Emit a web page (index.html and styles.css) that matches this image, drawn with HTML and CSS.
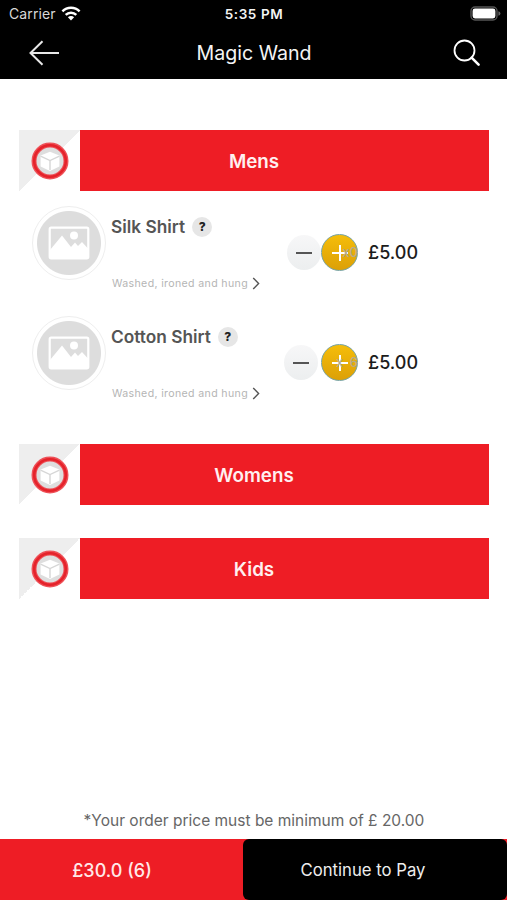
FILE: index.html
```html
<!DOCTYPE html>
<html lang="en">

    <head>
        <meta charset="utf-8">
        <title>Magic Wand</title>
        <link rel="stylesheet" href="styles.css">
    </head>

    <body>
        <!-- shared icons -->
        <svg class="defs" width="0" height="0">
            <symbol id="cube" viewBox="0 0 38 38">
                <circle cx="19" cy="19" r="16" fill="#dedede" stroke="#ee5158" stroke-width="5" />
                <circle cx="19" cy="19" r="15.8" fill="none" stroke="#e5232b" stroke-width="2.6" />
                <path d="M19 9.8l9.4 3.8v10.8L19 29l-9.4-4.6V13.6z" fill="#fff" />
                <path d="M9.6 14.2l9.4 4.4 9.4-4.4M19 18.6V28" fill="none" stroke="#d6d6d6" stroke-width="1.4" />
            </symbol>
            <symbol id="photo" viewBox="0 0 42 34">
                <rect x="1.7" y="1.7" width="38.6" height="30.6" rx="1.5" fill="none" stroke="#fff" stroke-width="2.2" />
                <circle cx="26" cy="9.5" r="4" fill="#fff" />
                <path d="M2 24l12-14.5 9 11.5 4-4.5 3 3.5 4-4 6 6.5v10H2z" fill="#fff" />
            </symbol>
            <symbol id="chevron" viewBox="0 0 8 13">
                <path d="M1.2 1l5.4 5.5L1.2 12" fill="none" stroke="#555" stroke-width="1.4" />
            </symbol>
        </svg>

        <header>
            <div class="status">
                <span class="carrier">Carrier</span>
                <svg class="wifi" width="20" height="15" viewBox="0 0 20 15" fill="none" stroke="#fff" stroke-width="2.5">
                    <path d="M1.4 5.4a12.2 12.2 0 0 1 17.2 0M4.7 8.9a7.5 7.5 0 0 1 10.6 0" />
                    <path d="M6.9 11.2a4.4 4.4 0 0 1 6.2 0L10 14.4z" fill="#fff" stroke="none" />
                </svg>
                <span class="time">5:35 PM</span>
                <svg class="battery" width="31" height="15" viewBox="0 0 31 15">
                    <rect x="1" y="1" width="26" height="13" rx="4" fill="none" stroke="#555" stroke-width="1.4" />
                    <rect x="2.6" y="2.6" width="22.8" height="9.8" rx="2.4" fill="#fff" />
                    <path d="M28.4 5.2q2 .6 2 2.3t-2 2.3z" fill="#666" />
                </svg>
            </div>
            <nav>
                <svg class="back" width="32" height="26" viewBox="0 0 32 26" fill="none" stroke="#e8e8e8" stroke-width="2">
                    <path d="M14.5 1.2L2.5 13l12 11.8M2.5 13H31" />
                </svg>
                <h1>Magic Wand</h1>
                <svg class="search" width="28" height="28" viewBox="0 0 28 28" fill="none" stroke="#fff">
                    <circle cx="11.5" cy="11.5" r="10" stroke-width="1.8" />
                    <path d="M18.6 18.6l7 7" stroke-width="2.6" stroke-linecap="round" />
                </svg>
            </nav>
        </header>

        <main>
            <section>
                <div class="category">
                    <div class="emblem"><svg><use href="#cube" /></svg></div>
                    <h2>Mens</h2>
                </div>
                <div class="item">
                    <div class="thumb"><svg><use href="#photo" /></svg></div>
                    <div class="info">
                        <div class="name">Silk Shirt <span class="help">?</span></div>
                        <div class="desc">Washed, ironed and hung <svg><use href="#chevron" /></svg></div>
                    </div>
                    <div class="stepper">
                        <button class="minus"></button>
                        <button class="plus"><span class="qty">x0</span></button>
                    </div>
                    <div class="price">£5.00</div>
                </div>
                <div class="item">
                    <div class="thumb"><svg><use href="#photo" /></svg></div>
                    <div class="info">
                        <div class="name">Cotton Shirt <span class="help">?</span></div>
                        <div class="desc">Washed, ironed and hung <svg><use href="#chevron" /></svg></div>
                    </div>
                    <div class="stepper spaced">
                        <button class="minus"></button>
                        <button class="plus"><span class="qty">x 6</span></button>
                    </div>
                    <div class="price">£5.00</div>
                </div>
            </section>
            <section>
                <div class="category">
                    <div class="emblem"><svg><use href="#cube" /></svg></div>
                    <h2>Womens</h2>
                </div>
            </section>
            <section>
                <div class="category">
                    <div class="emblem"><svg><use href="#cube" /></svg></div>
                    <h2>Kids</h2>
                </div>
            </section>
        </main>

        <p class="notice">*Your order price must be minimum of £ 20.00</p>
        <footer>
            <div class="total">£30.0 (6)</div>
            <button class="pay">Continue to Pay</button>
        </footer>
    </body>

</html>
```
FILE: styles.css
```css
* {
    box-sizing: border-box;
}

body {
    margin: 0;
    height: 900px;
    display: flex;
    flex-direction: column;
    background: #fff;
    font-family: Inter, "Liberation Sans", sans-serif;
    overflow: hidden;
}

h1, h2, p {
    margin: 0;
}

button {
    border: none;
    padding: 0;
    font-family: inherit;
}

.defs {
    position: absolute;
}

header {
    height: 79px;
    background: #000;
    color: #f4f4f4;
}

.status {
    height: 27px;
    display: grid;
    grid-template-columns: 52px 20px 1fr 31px;
    align-items: center;
    padding: 0 6px 0 9px;
    font-size: 14px;
}

.carrier {
    color: #d8d8d8;
    letter-spacing: 0.1px;
}

.time {
    padding-right: 43px;
    font-size: 13.5px;
    font-weight: 600;
    letter-spacing: 0.6px;
    text-align: center;
}

nav {
    height: 52px;
    display: flex;
    align-items: center;
    justify-content: space-between;
    padding: 0 26px 0 28px;
}

h1 {
    margin-right: 5px;
    font-size: 19.6px;
    font-weight: 400;
}

main {
    flex: 1;
    display: flex;
    flex-direction: column;
    gap: 33px;
    padding: 51px 18px 0 19px;
}

.category {
    display: flex;
    height: 61px;
}

.emblem {
    width: 61px;
    display: flex;
    align-items: center;
    justify-content: center;
    background: linear-gradient(135deg, #eee 50%, #fff 50%);
}

.emblem svg {
    width: 38px;
    height: 38px;
}

h2 {
    flex: 1;
    padding-right: 61px;
    background: #ee1d25;
    color: #fff0f0;
    font-size: 18.8px;
    font-weight: 600;
    line-height: 63px;
    text-align: center;
}

.item {
    height: 110px;
    display: flex;
    padding: 15px 0 0 13px;
}

.thumb {
    width: 74px;
    height: 74px;
    display: flex;
    align-items: center;
    justify-content: center;
    border: 1px solid #eee;
    border-radius: 50%;
    background: radial-gradient(circle, #ddd 31.5px, #fff 32.5px);
}

.thumb svg {
    width: 42px;
    height: 34px;
}

.info {
    width: 178px;
    padding: 9px 0 0 5px;
}

.name {
    display: flex;
    align-items: center;
    gap: 7px;
    height: 22px;
    color: #555;
    font-size: 17.3px;
    font-weight: 600;
    white-space: nowrap;
}

.help {
    width: 20px;
    height: 20px;
    margin-top: 2px;
    border-radius: 50%;
    background: #e6e6e6;
    color: #222;
    font-size: 12px;
    font-weight: 800;
    line-height: 20px;
    text-align: center;
}

.desc {
    display: flex;
    align-items: center;
    gap: 4px;
    height: 16px;
    margin: 38px 0 0 1px;
    color: #b5b5b5;
    font-size: 10.6px;
    letter-spacing: 0.35px;
    white-space: nowrap;
}

.desc svg {
    width: 8px;
    height: 13px;
}

.stepper {
    width: 74px;
    height: 37px;
    display: flex;
    justify-content: flex-end;
    margin-top: 28px;
}

.spaced {
    gap: 3px;
}

.minus, .plus {
    position: relative;
    width: 37px;
    height: 37px;
    border-radius: 50%;
}

.minus {
    width: 34px;
    height: 35px;
    margin-top: 1px;
    background: linear-gradient(#f7f7f8, #eceeef);
}

.plus {
    background: linear-gradient(#f5bd0a, #dca007);
    border: 1px solid #78a3a0;
}

.minus::before, .plus::before, .plus::after {
    content: "";
    position: absolute;
    top: 50%;
    left: 50%;
    width: 16px;
    height: 2px;
    transform: translate(-50%, -50%);
    background: #555;
}

.plus::before, .plus::after {
    background: #fff;
}

.plus::after {
    width: 2px;
    height: 16px;
}

.qty {
    position: absolute;
    z-index: 1;
    right: -1px;
    top: 9px;
    color: #b3aa8c;
    font-size: 13px;
    font-weight: 500;
    line-height: 16px;
    white-space: pre;
}

.spaced .qty {
    word-spacing: 3px;
}

.price {
    padding: 35px 0 0 10px;
    color: #1c1c1c;
    font-size: 18px;
    font-weight: 500;
    line-height: 24px;
}

.notice {
    height: 39px;
    padding-left: 1px;
    color: #666;
    font-size: 15.5px;
    line-height: 42px;
    text-align: center;
}

footer {
    height: 61px;
    display: flex;
    background: #ee1d25;
}

.total {
    width: 243px;
    padding-right: 19px;
    color: #ffe9e9;
    font-size: 18px;
    font-weight: 500;
    line-height: 63px;
    text-align: center;
}

.pay {
    flex: 1;
    padding-right: 24px;
    border-radius: 6px;
    background: #000;
    color: #eee;
    font-size: 16.7px;
}
```
